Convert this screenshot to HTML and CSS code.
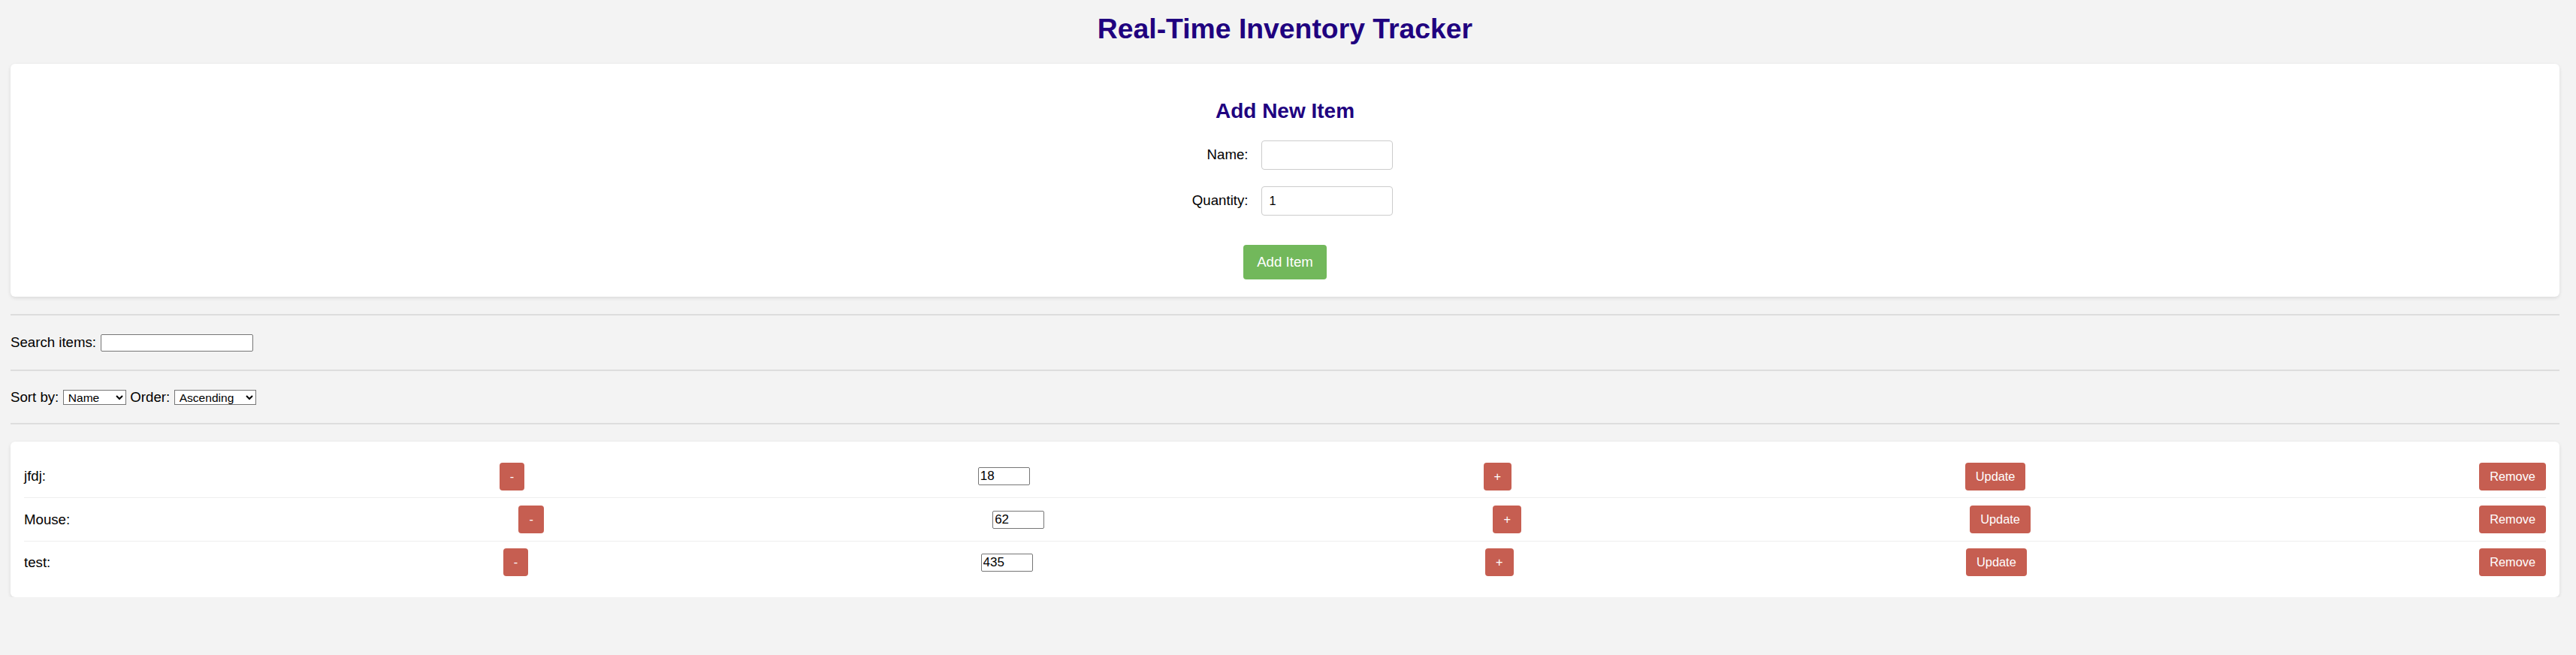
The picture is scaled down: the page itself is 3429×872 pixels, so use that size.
FILE: index.html
```html
<!DOCTYPE html>
<html lang="en">
<head>
<meta charset="utf-8">
<title>Real-Time Inventory Tracker</title>
<link rel="stylesheet" href="styles.css">
</head>
<body>
<div class="page">
  <h1 class="title">Real-Time Inventory Tracker</h1>

  <section class="card add-card">
    <h2 class="add-title">Add New Item</h2>
    <form class="add-form">
      <div class="form-row">
        <label class="form-label" for="item-name">Name:</label>
        <input class="form-input" id="item-name" type="text">
      </div>
      <div class="form-row">
        <label class="form-label" for="item-qty">Quantity:</label>
        <input class="form-input" id="item-qty" type="text" value="1">
      </div>
      <button class="btn-add" type="button">Add Item</button>
    </form>
  </section>

  <hr class="divider divider-first">

  <div class="toolbar search-bar">
    <label for="search">Search items:</label>
    <input class="search-input" id="search" type="text">
  </div>

  <hr class="divider">

  <div class="toolbar sort-bar">
    <label for="sort-field">Sort by:</label>
    <select class="select select-field" id="sort-field">
      <option>Name</option>
      <option>Quantity</option>
    </select>
    <label for="sort-order">Order:</label>
    <select class="select select-order" id="sort-order">
      <option>Ascending</option>
      <option>Descending</option>
    </select>
  </div>

  <hr class="divider">

  <section class="card list-card">
    <ul class="item-list">
      <li class="item-row">
        <span class="item-name">jfdj:</span>
        <button class="btn-small" type="button">-</button>
        <input class="qty-input" type="text" value="18">
        <button class="btn-small" type="button">+</button>
        <button class="btn-small" type="button">Update</button>
        <button class="btn-small" type="button">Remove</button>
      </li>
      <li class="item-row">
        <span class="item-name">Mouse:</span>
        <button class="btn-small" type="button">-</button>
        <input class="qty-input" type="text" value="62">
        <button class="btn-small" type="button">+</button>
        <button class="btn-small" type="button">Update</button>
        <button class="btn-small" type="button">Remove</button>
      </li>
      <li class="item-row">
        <span class="item-name">test:</span>
        <button class="btn-small" type="button">-</button>
        <input class="qty-input" type="text" value="435">
        <button class="btn-small" type="button">+</button>
        <button class="btn-small" type="button">Update</button>
        <button class="btn-small" type="button">Remove</button>
      </li>
    </ul>
  </section>
</div>
</body>
</html>
```

FILE: styles.css
```css
* {
  box-sizing: border-box;
}

html,
body {
  margin: 0;
  padding: 0;
  background: #f3f3f3;
}

body {
  font-family: "Liberation Sans", Arial, sans-serif;
  font-size: 18.67px;
  color: #000;
}

.page {
  padding: 0 22px 0 14px;
}

.title {
  margin: 17px 0 25px;
  font-size: 37.33px;
  line-height: 43px;
  font-weight: bold;
  color: #20007f;
  text-align: center;
}

.card {
  background: #fff;
  border-radius: 6px;
  box-shadow: 0 2px 5px rgba(0, 0, 0, 0.1);
}

.add-card {
  padding: 23.33px;
  text-align: center;
}

.add-title {
  margin: 23.33px 0 23.33px;
  font-size: 28px;
  line-height: 32px;
  font-weight: bold;
  color: #20007f;
}

.add-form {
  display: flex;
  flex-direction: column;
  align-items: center;
}

.form-row {
  display: grid;
  grid-template-columns: 94px 175px;
  column-gap: 17px;
  align-items: center;
  margin-bottom: 22px;
}

.form-label {
  text-align: right;
}

.form-input {
  height: 39px;
  border: 1px solid #ccc;
  border-radius: 4px;
  padding: 0 10px;
  font-family: inherit;
  font-size: 16.33px;
  color: #000;
  background: #fff;
}

.btn-add {
  margin-top: 17px;
  height: 46px;
  padding: 0 18px;
  border: 0;
  border-radius: 4px;
  background: #72b85b;
  color: #fff;
  font-family: inherit;
  font-size: 18.67px;
}

.divider {
  display: block;
  height: 2px;
  margin: 0;
  border: 0;
  background: #dddddd;
}

.divider-first {
  margin-top: 23px;
}

.toolbar {
  display: flex;
  align-items: center;
  gap: 5.5px;
}

.search-bar {
  height: 72px;
}

.sort-bar {
  height: 69px;
}

.search-input {
  width: 203px;
  height: 23px;
  padding: 1px 2px;
  border: 1px solid #767676;
  border-radius: 2px;
  background: #fff;
  font-family: inherit;
  font-size: 15.56px;
}

.select {
  height: 20px;
  padding: 0 0 0 2px;
  border: 1px solid #767676;
  border-radius: 0;
  background: #fff;
  color: #000;
  font-family: inherit;
  font-size: 15.56px;
}

.select-field {
  width: 84px;
}

.select-order {
  width: 109px;
}

.list-card {
  margin-top: 23px;
  padding: 18px;
}

.item-list {
  list-style: none;
  margin: 0;
  padding: 0;
}

.item-row {
  display: flex;
  justify-content: space-between;
  align-items: center;
  padding: 9.33px 0;
  border-bottom: 1px solid #eeeeee;
}

.item-row:last-child {
  border-bottom: 0;
}

.item-name {
  font-size: 18.67px;
}

.btn-small {
  height: 37.5px;
  padding: 0 14px;
  border: 0;
  border-radius: 4px;
  background: #c65e51;
  color: #fff;
  font-family: inherit;
  font-size: 16.33px;
}

.qty-input {
  width: 69px;
  height: 24px;
  padding: 1px 2px;
  border: 1px solid #767676;
  border-radius: 2px;
  background: #fff;
  font-family: inherit;
  font-size: 17px;
  color: #000;
}
```
